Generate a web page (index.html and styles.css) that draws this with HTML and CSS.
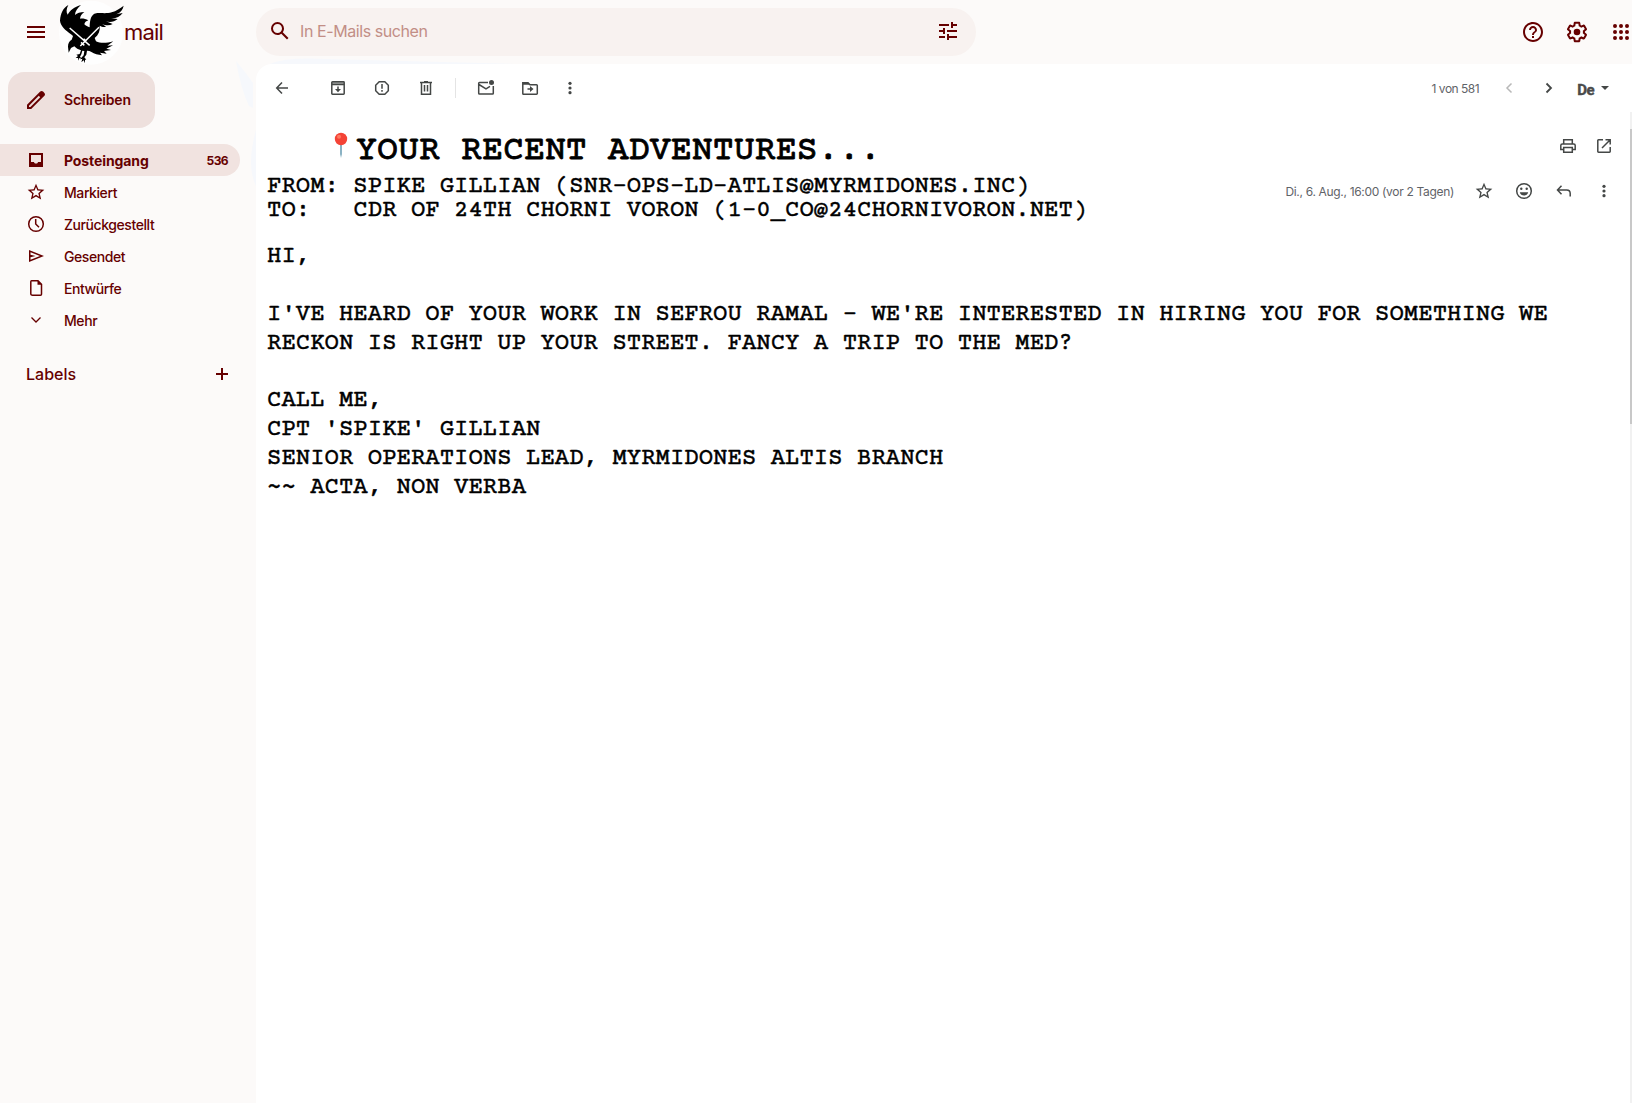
FILE: index.html
```html
<!DOCTYPE html>
<html lang="de">
<head>
<meta charset="utf-8">
<title>mail</title>
<link rel="stylesheet" href="styles.css">
</head>
<body>
<svg class="tint" viewBox="0 0 320 130"><path d="M0 5L9 16L17 27V52L13 50Q5 34 0 5zM34 8Q50 1 90 3L280 8z"/><path d="M20 130Q10 110 20 74z"/></svg>
<div class="app">
  <header class="topbar">
    <div class="brand">
      <svg class="i24 menu" viewBox="0 0 24 24"><path d="M3 18h18v-2H3v2zm0-5h18v-2H3v2zm0-7v2h18V6H3z"/></svg>
      <svg class="raven" viewBox="0 0 225 198">
        <circle class="halo" cx="108" cy="98" r="96"/>
        <path d="M50 104 C30 90 17 78 15 62 C17 40 24 24 40 15 C34 26 33 36 38 44 C44 32 58 20 78 15 C68 24 60 34 60 45 C66 39 76 36 88 36 C80 42 76 48 75 56 C82 55 92 56 100 61 C93 63 89 67 88 73 C92 77 98 80 104 82 C104 64 107 47 118 41 C134 37 154 42 170 37 C184 33 195 25 206 17 C204 29 196 38 184 43 L203 39 C195 50 183 56 168 55 L188 57 C178 65 166 68 153 64 L173 72 C162 78 150 76 141 71 L153 80 C146 82 140 80 134 77 C136 91 131 104 119 114 L123 124 C136 130 153 130 175 124 L157 137 L174 136 L154 146 L168 150 L147 153 L155 161 L135 158 L141 166 L124 163 C112 158 104 151 96 152 L94 164 L88 172 L94 179 L90 179 L90 190 L86 181 L79 187 L82 176 L75 178 L86 166 L88 153 L82 152 L79 163 L75 170 L79 175 L73 174 L71 182 L69 174 L62 174 L69 168 L64 164 L74 162 L78 151 C70 149 63 145 58 139 L48 144 L41 158 L39 140 C39 130 42 124 50 119 L54 108 Z"/>
        <path class="swords" d="M44 84l60 52M132 82l-56 56M78 127l10 9M94 124l-8-8"/>
      </svg>
      <span class="brand-name">mail</span>
    </div>
    <div class="search">
      <svg class="i24" viewBox="0 0 24 24"><path d="M20.49 19l-5.73-5.73C15.53 12.2 16 10.91 16 9.5A6.5 6.5 0 1 0 9.5 16c1.41 0 2.7-.47 3.77-1.24L19 20.49 20.49 19zM5 9.500C5 7.010 7.010 5 9.500 5S14 7.010 14 9.500 11.990 14 9.500 14 5 11.990 5 9.500z"/></svg>
      <span class="search-hint">In E-Mails suchen</span>
      <svg class="i24 tune" viewBox="0 0 24 24"><path d="M3 17v2h6v-2H3zM3 5v2h10V5H3zm10 16v-2h8v-2h-8v-2h-2v6h2zM7 9v2H3v2h4v2h2V9H7zm14 4v-2H11v2h10zm-6-4h2V7h4V5h-4V3h-2v6z"/></svg>
    </div>
    <div class="top-actions">
      <svg class="i24" viewBox="0 0 24 24"><path d="M11 18h2v-2h-2v2zm1-16C6.480 2 2 6.480 2 12s4.480 10 10 10 10-4.480 10-10S17.520 2 12 2zm0 18c-4.410 0-8-3.590-8-8s3.590-8 8-8 8 3.590 8 8-3.590 8-8 8zm0-14c-2.210 0-4 1.790-4 4h2c0-1.100.9-2 2-2s2 .9 2 2c0 2-3 1.750-3 5h2c0-2.250 3-2.500 3-5 0-2.210-1.790-4-4-4z"/></svg>
      <svg class="i24" viewBox="0 0 24 24"><path d="M13.850 22.250h-3.700c-.74 0-1.360-.54-1.450-1.270l-.27-1.890c-.27-.14-.53-.29-.79-.46l-1.800.72c-.7.26-1.470-.03-1.810-.65L2.200 15.530c-.35-.66-.2-1.440.36-1.880l1.530-1.190c-.01-.15-.02-.3-.02-.46 0-.15.01-.31.02-.46l-1.520-1.190c-.59-.45-.74-1.260-.37-1.880l1.850-3.190c.34-.62 1.110-.9 1.790-.63l1.810.73c.26-.17.52-.32.78-.46l.27-1.910c.09-.7.71-1.250 1.440-1.250h3.700c.74 0 1.360.54 1.450 1.270l.27 1.890c.27.14.53.29.79.46l1.800-.72c.71-.26 1.480.03 1.820.65l1.840 3.180c.36.66.2 1.440-.36 1.880l-1.520 1.190c.01.15.02.3.02.46s-.01.31-.02.46l1.520 1.190c.56.45.72 1.230.37 1.860l-1.860 3.220c-.34.62-1.110.9-1.800.63l-1.800-.72c-.26.17-.52.32-.78.46l-.27 1.910c-.1.680-.72 1.220-1.460 1.220zm-3.230-2h2.760l.37-2.550.53-.22c.44-.18.88-.44 1.340-.78l.45-.34 2.380.96 1.380-2.400-2.030-1.580.07-.56c.03-.26.06-.51.06-.78s-.03-.53-.06-.78l-.07-.56 2.030-1.580-1.390-2.400-2.390.96-.45-.35c-.42-.32-.87-.58-1.330-.77l-.52-.22-.37-2.550h-2.760l-.37 2.550-.53.21c-.44.19-.88.44-1.340.79l-.45.33-2.380-.95-1.390 2.390 2.030 1.580-.07.56a7 7 0 0 0-.06.79c0 .26.02.53.06.78l.07.56-2.030 1.580 1.380 2.400 2.390-.96.45.35c.43.33.86.58 1.330.77l.53.22.38 2.550z"/><circle cx="12" cy="12" r="3.3"/></svg>
      <svg class="i24" viewBox="0 0 24 24"><path d="M6 8a2 2 0 1 0 0-4 2 2 0 0 0 0 4zm6 12a2 2 0 1 0 0-4 2 2 0 0 0 0 4zm-6 0a2 2 0 1 0 0-4 2 2 0 0 0 0 4zm0-6a2 2 0 1 0 0-4 2 2 0 0 0 0 4zm6 0a2 2 0 1 0 0-4 2 2 0 0 0 0 4zm4-8a2 2 0 1 0 4 0 2 2 0 0 0-4 0zm-4 2a2 2 0 1 0 0-4 2 2 0 0 0 0 4zm6 6a2 2 0 1 0 0-4 2 2 0 0 0 0 4zm0 6a2 2 0 1 0 0-4 2 2 0 0 0 0 4z"/></svg>
    </div>
  </header>

  <aside class="sidebar">
    <div class="compose">
      <svg class="i24" viewBox="0 0 24 24"><path d="M20.410 4.940l-1.350-1.350c-.78-.78-2.050-.78-2.830 0L3 16.820V21h4.180L20.410 7.770c.79-.78.79-2.050 0-2.830zM6.410 19.060L5 19v-1.360l9.820-9.820 1.410 1.410-9.820 9.830z"/></svg>
      <span>Schreiben</span>
    </div>
    <nav class="folders">
      <div class="folder active"><svg class="i20" viewBox="0 0 20 20"><path d="M3 3h14v14H3zM5 5v7h3c.2 1 1 1.500 2 1.500s1.800-.5 2-1.500h3V5z" fill-rule="evenodd"/></svg><span class="label">Posteingang</span><span class="count">536</span></div>
      <div class="folder"><svg class="i20" viewBox="0 0 24 24"><path d="M22 9.240l-7.190-.62L12 2 9.190 8.630 2 9.240l5.460 4.730L5.820 21 12 17.270 18.180 21l-1.630-7.030L22 9.240zM12 15.400l-3.760 2.270 1-4.280-3.320-2.880 4.380-.38L12 6.100l1.710 4.040 4.380.38-3.320 2.880 1 4.280L12 15.400z"/></svg><span class="label">Markiert</span></div>
      <div class="folder"><svg class="i20 line" viewBox="0 0 20 20"><circle cx="10" cy="10" r="7.300"/><path d="M9.700 5v5l3.300 3.300"/></svg><span class="label">Zurückgestellt</span></div>
      <div class="folder"><svg class="i20" viewBox="0 0 20 20"><path d="M3 4l15 6-15 6zM4.500 6.300v2.500L9.500 10l-5 1.200v2.500L14 10z" fill-rule="evenodd"/></svg><span class="label">Gesendet</span></div>
      <div class="folder"><svg class="i20 line" viewBox="0 0 20 20"><path d="M5.500 2.800H12l3.500 3.500v9.900q0 1-1 1h-8q-1.500 0-1.700-1V3.800q0-1 .7-1z"/><path class="solid" d="M11.500 2.500v4.300h4.300z"/></svg><span class="label">Entwürfe</span></div>
      <div class="folder"><svg class="i20 line thin" viewBox="0 0 20 20"><path d="M5.500 7.500L10 12l4.500-4.500"/></svg><span class="label">Mehr</span></div>
    </nav>
    <div class="labels"><span>Labels</span><svg class="i20 line plus" viewBox="0 0 20 20"><path d="M10 4v12M4 10h12"/></svg></div>
  </aside>

  <main class="mail">
    <div class="toolbar">
      <div class="tools">
        <svg class="i20 line g-back" viewBox="0 0 20 20"><path d="M16 10H5M10 4.500L4.700 10l5.300 5.500"/></svg>
        <svg class="i20 line" viewBox="0 0 20 20"><path d="M4.500 3.800h11q.7 0 .7.700v11q0 .7-.7.700h-11q-.7 0-.7-.7v-11q0-.7.700-.7zM4 6.500h12M10 8.500v4"/><path class="solid" d="M7 11h6l-3 3.200z"/><path class="solid soft" d="M4 4h12v2.500H4z"/></svg>
        <svg class="i20 line" viewBox="0 0 20 20"><path d="M7.200 3.700h5.600l3.500 3.500v5.600l-3.500 3.500H7.200l-3.500-3.500V7.200zM10 6v4.800M10 12v1.700"/></svg>
        <svg class="i20 line" viewBox="0 0 20 20"><path d="M4 4.500h12M8 3.700h4M5.500 4.500v11.700h9V4.500M8.500 7v6.500M11.500 7v6.500"/></svg>
        <i class="rule"></i>
        <svg class="i20 line" viewBox="0 0 20 20"><path d="M12 4.500H3.500q-.8 0-.8.800v10q0 .8.800.8h13q.8 0 .8-.8V8M3 6.500l7 4.300 4-2.500"/><circle class="solid" cx="15.500" cy="4.500" r="2.500"/></svg>
        <svg class="i20 line g-md" viewBox="0 0 20 20"><path d="M2.800 15.300V4.700H8l2 2h6.500q.8 0 .8.800v8q0 .7-.8.700h-13q-.7 0-.7-.9zM7.500 11H11"/><path class="solid" d="M10 8l3.500 3-3.500 3zM2.800 4.500H8l2 2.300H2.800z"/></svg>
        <svg class="i20" viewBox="0 0 20 20"><circle cx="10" cy="5.300" r="1.600"/><circle cx="10" cy="10" r="1.600"/><circle cx="10" cy="14.700" r="1.600"/></svg>
      </div>
      <div class="pager">
        <span class="position">1 von 581</span>
        <svg class="i20 line off" viewBox="0 0 20 20"><path d="M12.500 5.500L8 10l4.500 4.500"/></svg>
        <svg class="i20 line next" viewBox="0 0 20 20"><path d="M7.500 5.500L12 10l-4.500 4.500"/></svg>
        <span class="lang">De</span>
        <i class="caret"></i>
      </div>
    </div>

    <div class="reader">
      <article class="message">
        <div class="headline">
          <svg class="pin" viewBox="0 0 14 28"><path d="M6.200 10h1.600v12L7 26l-.8-4z" fill="#6d9fb5"/><circle cx="7" cy="7" r="6.200" fill="#f44336"/><circle cx="5" cy="4.700" r="2" fill="#ff7961"/></svg>
          <h1>YOUR RECENT ADVENTURES...</h1>
        </div>
<pre class="parties">FROM: SPIKE GILLIAN (SNR-OPS-LD-ATLIS@MYRMIDONES.INC)
TO:   CDR OF 24TH CHORNI VORON (1-0_CO@24CHORNIVORON.NET)</pre>
<pre class="text">HI,

I'VE HEARD OF YOUR WORK IN SEFROU RAMAL - WE'RE INTERESTED IN HIRING YOU FOR SOMETHING WE
RECKON IS RIGHT UP YOUR STREET. FANCY A TRIP TO THE MED?

CALL ME,
CPT 'SPIKE' GILLIAN
SENIOR OPERATIONS LEAD, MYRMIDONES ALTIS BRANCH
~~ ACTA, NON VERBA</pre>
      </article>
      <div class="meta">
        <div class="meta-row">
          <svg class="i20 line" viewBox="0 0 20 20"><path d="M5.500 13.500H2.800V9.500q0-1.500 1.500-1.500h11.400q1.500 0 1.500 1.500v4h-2.700M5.700 8V3.800h8.600V8M5.700 11.500h8.600v4.700H5.700z"/></svg>
          <svg class="i20 line" viewBox="0 0 20 20"><path d="M9 3.800H4.500q-.7 0-.7.700v11q0 .7.700.7h11q.7 0 .7-.7V11M11.500 3.800h4.700v4.700M16 4l-8 8"/></svg>
        </div>
        <div class="meta-row second">
          <span class="date">Di., 6. Aug., 16:00 (vor 2 Tagen)</span>
          <svg class="i20" viewBox="0 0 24 24"><path d="M22 9.240l-7.190-.62L12 2 9.190 8.630 2 9.240l5.460 4.730L5.820 21 12 17.270 18.180 21l-1.630-7.030L22 9.240zM12 15.400l-3.760 2.270 1-4.280-3.320-2.880 4.380-.38L12 6.100l1.710 4.040 4.380.38-3.320 2.880 1 4.280L12 15.400z"/></svg>
          <svg class="i20 line" viewBox="0 0 20 20"><circle cx="10" cy="10" r="7.300"/><path class="solid" d="M5.800 11.300h8.400q-1 3.300-4.200 3.300t-4.200-3.300z"/><circle class="solid" cx="7.300" cy="7.800" r="1.200"/><circle class="solid" cx="12.700" cy="7.800" r="1.200"/></svg>
          <svg class="i20 line" viewBox="0 0 20 20"><path d="M16.200 15.500v-3q0-3.500-3.500-3.500H4M7.500 4.800L3.500 9l4 4.200"/></svg>
          <svg class="i20" viewBox="0 0 20 20"><circle cx="10" cy="5.300" r="1.600"/><circle cx="10" cy="10" r="1.600"/><circle cx="10" cy="14.700" r="1.600"/></svg>
        </div>
      </div>
      <div class="scrollbar"><div class="thumb"></div></div>
    </div>
  </main>
</div>
</body>
</html>
```
FILE: styles.css
```css
* { box-sizing: border-box; }

body {
  margin: 0;
  background: #fcfaf9;
  color: #660000;
  font-family: Inter, Roboto, sans-serif;
  overflow: hidden;
}

svg { fill: currentColor; flex: none; display: block; }
.i24 { width: 24px; height: 24px; }
.i20 { width: 20px; height: 20px; }
.line { fill: none; stroke: currentColor; stroke-width: 1.5; }
.solid { fill: currentColor; stroke: none; }
.soft { opacity: .5; }
.thin { stroke-width: 1.3; }

/* faint cool shading behind the corner of the mail panel */
.tint {
  position: absolute;
  left: 236px;
  top: 56px;
  width: 320px;
  height: 130px;
  color: #f6f8fc;
}

.app {
  position: relative;
  display: grid;
  grid-template: 64px 1fr / 256px 1fr;
  width: 1632px;
  height: 1103px;
}

.topbar {
  grid-column: 1 / 3;
  display: grid;
  grid-template-columns: 256px 720px 1fr;
}
.brand { display: flex; align-items: center; height: 63px; padding-left: 24px; }
.raven { width: 75px; height: 66px; margin: 2px -6px 0 7px; color: #000; overflow: visible; }
.halo { fill: #fefefe; }
.swords { fill: none; stroke: #fff; stroke-width: 4.5; }
.brand-name { font-size: 22px; letter-spacing: -.8px; }

.search {
  display: flex;
  align-items: center;
  height: 48px;
  margin-top: 8px;
  padding: 0 16px 2px 12px;
  border-radius: 24px;
  background: #f8f2f0;
}
.search-hint { flex: 1; margin-left: 8px; font-size: 16px; letter-spacing: -.42px; color: #c28e86; }

.top-actions { display: flex; justify-content: flex-end; align-items: center; gap: 20px; height: 63px; margin-right: -1px; }

.compose {
  display: flex;
  align-items: center;
  gap: 16px;
  width: 147px;
  height: 56px;
  margin: 8px 0 16px 8px;
  padding: 0 0 1px 16px;
  border-radius: 16px;
  background: #eee0dd;
  font-size: 14px;
  font-weight: 600;
  letter-spacing: -.2px;
}

.folder {
  display: flex;
  align-items: center;
  width: 240px;
  height: 32px;
  padding: 0 12px 0 26px;
  border-radius: 0 16px 16px 0;
  font-size: 14px;
  font-weight: 500;
  letter-spacing: -.42px;
}
.folder .label { flex: 1; margin-left: 18px; }
.folder.active { background: #f1e3e0; font-weight: 700; letter-spacing: -.1px; }
.count { font-size: 12px; letter-spacing: -.6px; }

.labels {
  display: flex;
  justify-content: space-between;
  align-items: center;
  height: 32px;
  margin: 22px 24px 0 26px;
  font-size: 16px;
  font-weight: 500;
}
.plus { stroke-width: 2; }

.mail {
  display: grid;
  grid-template-rows: 48px 1fr;
  background: #fff;
  border-radius: 16px 0 0 0;
  color: #444746;
}
.toolbar { display: flex; justify-content: space-between; align-items: center; }
.tools { display: flex; align-items: center; gap: 24px; padding-left: 16px; }
.g-back { margin-right: 12px; }
.rule { width: 1px; height: 20px; margin: 0 -4px 0 -5px; background: #e4e4e4; }
.tools .g-md { margin-right: -4px; }

.pager { display: flex; align-items: center; color: #5f6368; }
.position { font-size: 12px; letter-spacing: -.5px; margin: 1px 20px 0 0; }
.pager .i20 { color: #444746; margin-right: 20px; }
.pager .i20.off { color: #b8b8b8; }
.pager .next { stroke-width: 1.8; }
.lang { font: 700 15px Roboto, sans-serif; color: #4a4a4a; margin: 3px 7px 0 -2px; letter-spacing: -.5px; -webkit-text-stroke: .4px; }
.caret {
  border: 4px solid transparent;
  border-top-color: #444746;
  border-bottom: 0;
  margin-right: 23px;
}

.reader { display: grid; grid-template-columns: minmax(0, 990px) 1fr 2px; }
.message {
  padding: 16px 0 0 11px;
  color: #000;
  font-family: "Courier Prime", "Liberation Mono", monospace;
  -webkit-text-stroke: .45px #000;
}
.headline { display: flex; align-items: flex-start; height: 47px; padding-left: 67px; }
.pin { width: 14px; height: 28px; margin-top: 4px; }
h1 { margin: 4px 0 0 8px; font: inherit; font-size: 35px; line-height: 40px; white-space: nowrap; -webkit-text-stroke: .8px #000; }
pre { margin: 0; font: inherit; font-size: 24px; }
.parties { line-height: 24px; }
.text { line-height: 28.85px; margin-top: 20px; }

.meta { padding: 24px 16px 0 0; }
.meta-row { display: flex; justify-content: flex-end; align-items: center; gap: 16px; }
.second { gap: 20px; margin-top: 25px; }
.date { font-size: 12px; letter-spacing: -.32px; color: #5f6368; white-space: nowrap; }

.scrollbar { background: #f1f1f1; }
.thumb { height: 295px; margin-top: 17px; background: #c8c8c8; }
```
